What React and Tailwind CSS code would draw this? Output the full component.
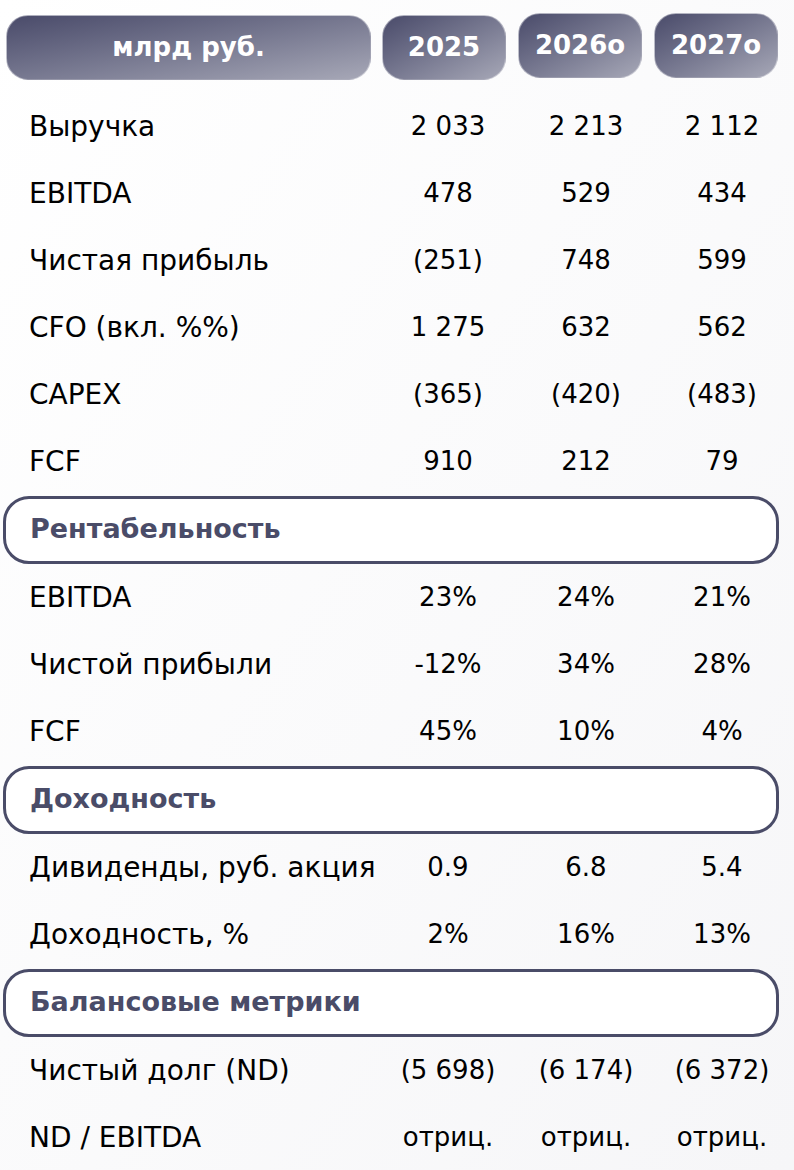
import React from 'react';

const font = { fontFamily: '"DejaVu Sans", "Noto Sans", sans-serif' };

const main = [
    ['Выручка', '2 033', '2 213', '2 112'],
    ['EBITDA', '478', '529', '434'],
    ['Чистая прибыль', '(251)', '748', '599'],
    ['CFO (вкл. %%)', '1 275', '632', '562'],
    ['CAPEX', '(365)', '(420)', '(483)'],
    ['FCF', '910', '212', '79'],
];

const margins = [
    ['EBITDA', '23%', '24%', '21%'],
    ['Чистой прибыли', '-12%', '34%', '28%'],
    ['FCF', '45%', '10%', '4%'],
];

const yields = [
    ['Дивиденды, руб. акция', '0.9', '6.8', '5.4'],
    ['Доходность, %', '2%', '16%', '13%'],
];

const balance = [
    ['Чистый долг (ND)', '(5 698)', '(6 174)', '(6 372)'],
    ['ND / EBITDA', 'отриц.', 'отриц.', 'отриц.'],
];

const Row = ({ row }) => (
    <div className="grid grid-cols-[382px_136px_136px_136px] h-[67px] items-center text-[26px] text-black">
        <div className="pl-[29px] whitespace-nowrap text-[28px]">{row[0]}</div>
        <div className="text-center pr-[4px]">{row[1]}</div>
        <div className="text-center">{row[2]}</div>
        <div className="text-center">{row[3]}</div>
    </div>
);

const Section = ({ title }) => (
    <div className="h-[69px] flex items-center pl-[3px] pr-[15px]">
        <div className="w-full h-[68px] rounded-[26px] border-[3px] border-[#4a4c68] bg-white flex items-center pl-[24px]">
            <span className="text-[27px] font-bold text-[#4a4c68]">{title}</span>
        </div>
    </div>
);

const Pill = ({ children, className = '' }) => (
    <div className={`h-[65px] rounded-[22px] bg-linear-to-br from-[#4a4b6a] to-[#a7a8b7] border border-white/40 flex items-center justify-center text-white font-bold text-[26px] ${className}`}>
        {children}
    </div>
);

export default function App() {
    return (
        <div className="w-[794px] h-[1170px] bg-linear-to-br from-white to-[#f6f6f8] overflow-hidden" style={font}>
            <div className="grid grid-cols-[382px_136px_136px_136px] pt-[15px] mb-[13px]">
                <div className="pl-[6px] pr-[11px]"><Pill>млрд руб.</Pill></div>
                <div className="pr-[12px]"><Pill>2025</Pill></div>
                <div className="pr-[12px] -mt-[2px]"><Pill>2026о</Pill></div>
                <div className="pr-[12px] -mt-[2px]"><Pill>2027о</Pill></div>
            </div>
            {main.map((r, i) => <Row key={i} row={r} />)}
            <Section title="Рентабельность" />
            {margins.map((r, i) => <Row key={i} row={r} />)}
            <Section title="Доходность" />
            {yields.map((r, i) => <Row key={i} row={r} />)}
            <Section title="Балансовые метрики" />
            {balance.map((r, i) => <Row key={i} row={r} />)}
        </div>
    );
}
